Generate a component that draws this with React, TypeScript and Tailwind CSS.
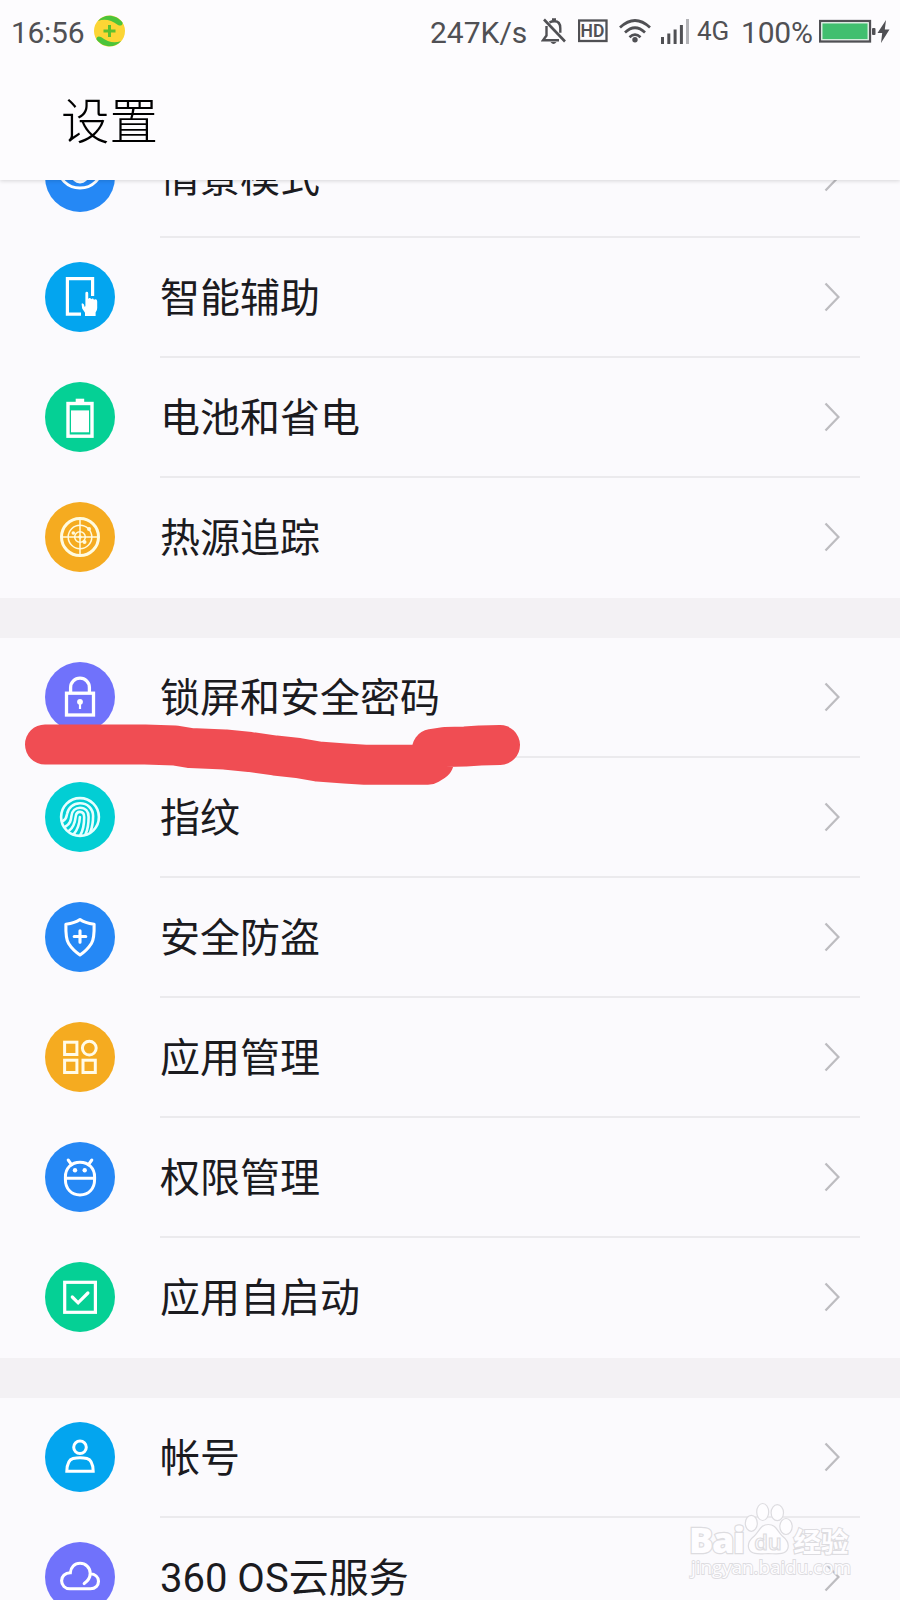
// 系统设置页面

import type { ReactNode } from 'react'

interface Item {
  label: string
  color: string
  icon: ReactNode
}

const modeIcon = (
  <g fill="none" stroke="#fff">
    <circle cx="35" cy="23.500" r="22.500" strokeWidth="2.800" />
    <circle cx="35" cy="32.500" r="9" fill="#fff" stroke="none" />
  </g>
)

const assistIcon = (
  <g>
    <path d="M36 52.2H22.400V16.600H47.600V34" fill="none" stroke="#fff" strokeWidth="3.200" />
    <path
      d="M40.400 31.200q0-1.400 1.400-1.400t1.400 1.400V37q.4-1 1.500-1t1.400 1.200q.5-.7 1.500-.7t1.300 1.300q.6-.6 1.600-.6 1.700 0 1.700 2.400v6.400q0 2.600-1.600 4.600V54H40V50.800l-2.800-4.200-.6-4.400q.1-1 1-.8 1.200.2 1.600 1.800l.2 1.400q.7.400 1-.6Z"
      fill="#fff"
    />
  </g>
)

const batteryIcon = (
  <g fill="#fff">
    <rect x="30.700" y="16.700" width="8.500" height="4" />
    <rect x="23" y="21.500" width="24" height="32.700" fill="none" stroke="#fff" strokeWidth="3.400" />
    <rect x="26" y="28.400" width="18" height="21.900" />
  </g>
)

const radarIcon = (
  <g fill="none" stroke="#fffbe0" strokeWidth="1.500">
    <circle cx="35" cy="35" r="18.500" strokeWidth="3" />
    <circle cx="35" cy="35" r="11.800" />
    <circle cx="35" cy="35" r="5.300" />
    <path d="M16 35H54M35 16V54" />
    <g fill="#fffbe0" stroke="none">
      <circle cx="35" cy="35" r="1.800" />
      <circle cx="28.300" cy="31" r="1.800" />
      <circle cx="44" cy="27" r="2" />
      <circle cx="39.500" cy="40" r="2" />
    </g>
  </g>
)

const lockIcon = (
  <g fill="none" stroke="#fff" strokeWidth="3.300">
    <rect x="21.500" y="31.200" width="27" height="21.800" />
    <path d="M25.600 31V25.500a9.400 9.400 0 0 1 18.800 0V31" />
    <circle cx="35" cy="39.800" r="2.900" fill="#fff" stroke="none" />
    <path d="M35 40V47" strokeWidth="2.200" />
  </g>
)

const fingerprintIcon = (
  <g fill="none" stroke="#e6ffff" strokeWidth="2.600" strokeLinecap="round">
    <circle cx="35" cy="35" r="18.900" />
    <path d="M18 39c3.500-1.500 3.400-4 4.100-7.300C23.200 25.500 28.500 21.300 35 21.300c7.700 0 13.100 5.500 13.100 12.800 0 6.200-.8 11.100-2.800 16" />
    <path d="M20.500 44.500c4.700-2.400 5.400-6.200 6-10.900C27.100 28.900 30.300 25.700 35 25.700c5.300 0 8.600 3.600 8.600 9.200 0 6.600-.8 12.300-3.100 17.500" />
    <path d="M24 48.800c4.500-3.300 6-8.200 6.700-14.200.3-2.800 1.800-4.700 4.300-4.700 2.800 0 4.200 2.100 4.200 5.300 0 6.900-1.100 12.900-3.900 17.900" />
    <path d="M29 51.800c3.500-4.200 5.500-9.600 5.900-16.800" />
  </g>
)

const shieldIcon = (
  <g fill="none" stroke="#fff" strokeWidth="3.100" strokeLinejoin="round" strokeLinecap="round">
    <path d="M35 17.500C31.500 20 26 21.500 20.900 22.200c-.3 11 .2 15.300 2.700 19.300C26 45.300 31 50.300 35 53 39 50.300 44 45.300 46.400 41.500c2.500-4 3-8.300 2.700-19.300C44 21.500 38.500 20 35 17.500Z" />
    <path d="M29.200 34.500H40.800M35 28.700V40.300" />
  </g>
)

const appsIcon = (
  <g fill="none" stroke="#fffbe8" strokeWidth="3">
    <rect x="19.600" y="20.200" width="12.300" height="12.300" />
    <rect x="19.600" y="38.200" width="12.300" height="12.300" />
    <rect x="38" y="38.200" width="12.300" height="12.300" />
    <circle cx="44.300" cy="26.100" r="6.900" />
  </g>
)

const androidIcon = (
  <g fill="none" stroke="#fff" strokeWidth="3" strokeLinecap="round">
    <path d="M20.400 35C20.400 26 26.500 20.200 35 20.200s14.600 5.800 14.600 14.800v2.500C49.600 47 43.500 53 35 53s-14.600-6-14.600-15.500ZM21 36.200H49" />
    <path d="M23.200 18 26.700 22.800M46.800 18 43.300 22.800" />
    <circle cx="30" cy="28.300" r="2.200" fill="#fff" stroke="none" />
    <circle cx="39.700" cy="28.300" r="2.200" fill="#fff" stroke="none" />
  </g>
)

const checkIcon = (
  <g fill="none" stroke="#fff" strokeWidth="3.200">
    <rect x="19.700" y="20.300" width="30.700" height="30" />
    <path d="m27.300 35 5.800 5.800 9.800-9.800" strokeLinecap="round" />
  </g>
)

const accountIcon = (
  <g fill="none" stroke="#fff" strokeWidth="3">
    <circle cx="35" cy="25.300" r="6.300" />
    <path d="M21.800 49.300C22 42.500 24 37.500 28 36.500q7-1.600 14 0C46 37.500 48 42.500 48.200 49.300Z" />
  </g>
)

const cloudIcon = (
  <g fill="none" stroke="#fff" strokeWidth="3.100" strokeLinecap="round">
    <path d="M39.200 41.500C43.500 38.500 45.200 34.800 45.200 31.200 45.200 25.500 40.500 21.200 35 21.200c-5.500 0-9.300 4.200-9.700 9.600C20 30.900 16.600 34.500 16.600 38.800c0 4.500 3.400 8 8.200 8H45.500c4.800 0 8-3.400 8-7.500 0-4.200-3.400-7.200-8.300-7.500" />
  </g>
)

const groups: Item[][] = [
  [
    { label: '情景模式', color: 'bg-[#2588f5]', icon: modeIcon },
    { label: '智能辅助', color: 'bg-[#03a5ef]', icon: assistIcon },
    { label: '电池和省电', color: 'bg-[#05d095]', icon: batteryIcon },
    { label: '热源追踪', color: 'bg-[#f5ab20]', icon: radarIcon },
  ],
  [
    { label: '锁屏和安全密码', color: 'bg-[#7072fb]', icon: lockIcon },
    { label: '指纹', color: 'bg-[#02ced4]', icon: fingerprintIcon },
    { label: '安全防盗', color: 'bg-[#2588f5]', icon: shieldIcon },
    { label: '应用管理', color: 'bg-[#f5ab20]', icon: appsIcon },
    { label: '权限管理', color: 'bg-[#2588f5]', icon: androidIcon },
    { label: '应用自启动', color: 'bg-[#05d095]', icon: checkIcon },
  ],
  [
    { label: '帐号', color: 'bg-[#03a5ef]', icon: accountIcon },
    { label: '360 OS云服务', color: 'bg-[#7072fb]', icon: cloudIcon },
  ],
]

/** 顶部状态栏 */
function StatusBar() {
  return (
    <div className="flex h-16 items-center pl-[11px] pr-[9px] text-[30px] leading-none text-[#505054]">
      <span className="w-[83px] pt-0.5 tracking-[-0.3px]">16:56</span>
      <svg className="-mt-0.5 size-8" viewBox="0 0 32 32">
        <circle cx="15.500" cy="16" r="15.500" fill="#fcd535" />
        <path d="M4 6C9-.5 21-2 28.500 7.500c.5 2.500-2 4-4.500 2.500C17 4.500 10 3.500 4 6ZM27 26C22 32.500 10 34 2.500 24.500c-.5-2.500 2-4 4.500-2.500 7 5.500 14 6.500 20 4Z" fill="#4cc43a" />
        <path d="M9.500 16h12M15.500 10v12" stroke="#5cc02f" strokeWidth="3" />
      </svg>

      <span className="ml-auto w-[111px] pt-0.5">247K/s</span>
      <svg className="-mt-0.5 h-7 w-[27px]" viewBox="0 0 27 28" fill="none" stroke="#505054" strokeWidth="2.400">
        <path d="M3 2.500 24 24.500" strokeWidth="2.600" />
        <path d="M5.500 9v9.500L2 23.300h16M8.500 5.500Q10.500 4.200 13.500 4.200q5.800 0 5.800 7v4.500" />
        <path d="M11 2.500h4" strokeWidth="2.500" />
        <path d="M9.500 25h6q-3 4-6 0Z" fill="#505054" stroke="none" />
      </svg>
      <svg className="-mt-0.5 ml-2.5 h-6 w-[30px]" viewBox="0 0 30 24">
        <rect x="1" y="1.500" width="27.500" height="20.500" fill="none" stroke="#505054" strokeWidth="2.300" />
        <text x="14.500" y="17.900" textAnchor="middle" fontSize="17.500" fontWeight="600" fill="#505054">HD</text>
      </svg>
      <svg className="-mt-0.5 ml-[11px] h-6 w-8" viewBox="0 0 32 24" fill="none" stroke="#505054" strokeWidth="2.700">
        <path d="M1 8.500Q16-5.500 31 8.500M6 13.500q10-9.500 20 0M10.500 18.200q5.500-5 11 0" />
        <circle cx="16" cy="20.800" r="2.700" fill="#505054" stroke="none" />
      </svg>
      <svg className="-mt-0.5 ml-[10px] h-[26px] w-[29px]" viewBox="0 0 29 26" fill="#505054">
        <rect x="0" y="19" width="3" height="7" />
        <rect x="6.300" y="15.500" width="3" height="10.500" />
        <rect x="12.600" y="11.500" width="3" height="14.500" />
        <rect x="18.900" y="7" width="3" height="19" />
        <rect x="25" y="1" width="3" height="25" fill="#b3b3b7" />
      </svg>
      <span className="-mt-0.5 ml-[7px] w-[44px] text-[26px]">4G</span>
      <span className="w-[78px] pt-0.5 tracking-[-0.2px]">100%</span>
      <svg className="-mt-0.5 h-6 w-[72px]" viewBox="0 0 72 24">
        <rect x="1" y="2" width="50" height="20.500" fill="none" stroke="#505054" strokeWidth="2.300" />
        <rect x="3" y="4" width="46" height="16.500" fill="#41bf6f" stroke="#d5eedd" strokeWidth="1" />
        <rect x="53" y="9" width="3.500" height="7" rx="1" fill="#505054" />
        <path d="M67 1 58.500 14h4.700L62 24 70.500 10.500h-4.700Z" fill="#505054" />
      </svg>
    </div>
  )
}

/** 设置项 */
function Row({ item, last }: { item: Item; last: boolean }) {
  return (
    <div className="flex h-[120px] shrink-0 pl-[45px]">
      <div className={`mt-[24.4px] size-[70px] rounded-full ${item.color}`}>
        <svg viewBox="0 0 70 70">{item.icon}</svg>
      </div>
      <div className={`ml-[45px] flex w-[700px] items-center justify-between border-b-2 pr-5 ${last ? 'border-transparent' : 'border-[#ebeaed]'}`}>
        <span className="pt-1 text-[40px] leading-none text-[#1b1b1f]">{item.label}</span>
        <svg className="h-[30px] w-4" viewBox="0 0 16 30" fill="none" stroke="#bdbcc0" strokeWidth="2.300">
          <path d="m1.500 1.500 13 13.500-13 13.500" />
        </svg>
      </div>
    </div>
  )
}

/** 右下角水印 */
function Watermark() {
  return (
    <svg
      className="absolute left-[680px] top-[1495px] h-[90px] w-[190px]"
      viewBox="0 0 190 90"
      fill="#fefdff"
      stroke="#dddce0"
      strokeWidth="1.200"
      fontFamily="'Open Sans', 'Noto Sans CJK SC', sans-serif"
    >
      <text x="9" y="58" fontSize="36" fontWeight="800" textLength="56" paintOrder="stroke" strokeWidth="2.400">Bai</text>
      <ellipse cx="82.700" cy="17" rx="6" ry="8.500" />
      <ellipse cx="97.300" cy="17.700" rx="6.200" ry="8" />
      <ellipse cx="71.300" cy="28.300" rx="6" ry="8" />
      <ellipse cx="106" cy="31.500" rx="6.200" ry="8" />
      <path d="M88.300 29.500c8 0 9 7 14 11.500 5 4 7 8 5.500 12.500-2 5.500-8 6-19.500 5-11.500 1-17.500.5-19.500-5C67.300 49 69.300 45 74.300 41c5-4.500 6-11.500 14-11.500Z" />
      <text x="88" y="54.500" textAnchor="middle" fontSize="22" fontWeight="600">du</text>
      <text x="113.500" y="56.500" fontSize="27.500" fontWeight="700" paintOrder="stroke" strokeWidth="2.200">经验</text>
      <text x="11" y="78.500" fontSize="19" textLength="160" paintOrder="stroke" strokeWidth="1.800">jingyan.baidu.com</text>
    </svg>
  )
}

export default function App() {
  return (
    <div className="relative flex h-[1600px] w-[900px] flex-col overflow-hidden bg-[#fbfafd] font-[Roboto,'Noto_Sans_CJK_SC',sans-serif]">
      <header className="z-10 h-[180px] shrink-0 bg-[#fdfcfe] shadow-[0_1px_4px_rgba(0,0,0,0.15)]">
        <StatusBar />
        <h1 className="pl-[61px] pt-[35px] text-[48.5px] font-light leading-none text-black">设置</h1>
      </header>

      {/* 列表向上滚动, 首行被标题栏遮住一部分 */}
      <main className="-mt-[62px] flex flex-col gap-10 bg-[#f3f1f4]">
        {groups.map((group, i) => (
          <section key={i} className="flex flex-col bg-[#fbfafd]">
            {group.map((item, j) => (
              <Row key={item.label} item={item} last={j === group.length - 1} />
            ))}
          </section>
        ))}
      </main>

      {/* 红色涂抹标记 */}
      <svg className="absolute left-0 top-[700px] h-[100px] w-[540px]" viewBox="0 0 540 100" fill="none">
        <path
          d="M45 44.500H145L175 45.500 190 48 225 49.500 250 52 275 55.500 298 58 318 61.500 345 63.500 365 64.800H428L434 61 432 49 445 47 465 46.500 480 45.500 500 45"
          stroke="#f04d53"
          strokeWidth="40"
          strokeLinecap="round"
          strokeLinejoin="round"
        />
      </svg>

      <Watermark />
    </div>
  )
}
